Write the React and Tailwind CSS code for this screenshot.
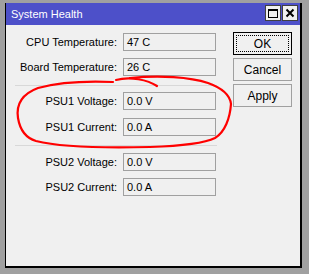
import React from "react";

const font = { fontFamily: '"Liberation Sans", Arial, sans-serif' };

function Row({ label, value, className = "" }) {
  return (
    <div className={"flex items-center h-[18px] " + className}>
      <div className="w-[103px] text-right text-[11px] text-black pr-[1px]">{label}</div>
      <div className="ml-[5px] w-[93px] h-[18px] border border-[#a0a0a0] bg-[#f0f0f0] flex items-center pl-[3px] text-[11px] text-black">
        {value}
      </div>
    </div>
  );
}

function Btn({ children, def }) {
  return (
    <div
      className={
        "w-[59px] h-[23px] flex items-center justify-center text-[12px] text-black bg-[#f0f0f0] " +
        (def ? "border border-black p-[2px]" : "border border-[#a0a0a0]")
      }
    >
      {def ? (
        <div className="w-full h-full border border-dotted border-black flex items-center justify-center">
          {children}
        </div>
      ) : (
        children
      )}
    </div>
  );
}

export default function App() {
  return (
    <div className="relative w-[309px] h-[274px] bg-[#a0a0a0] pt-[3px] pl-[5px]" style={font}>
      <div className="w-[297px] h-[265px] border-l border-r-2 border-b-2 border-black flex flex-col bg-[#f0f0f0]">
        <div className="h-[22px] bg-[#4d50c9] flex items-center pl-[5px] pr-[2px]">
          <span className="text-white text-[11px] flex-1">System Health</span>
          <div className="flex gap-[1px] mt-[-2px]">
            <div className="w-[16px] h-[16px] bg-[#f0f0f0] border border-[#404040] flex items-center justify-center">
              <div className="w-[10px] h-[9px] border border-black border-t-2"></div>
            </div>
            <div className="w-[16px] h-[16px] bg-[#f0f0f0] border border-[#404040] flex items-center justify-center">
              <svg width="10" height="10" viewBox="0 0 10 10">
                <path d="M1.5 1.5 L8.5 8.5 M8.5 1.5 L1.5 8.5" stroke="#000" strokeWidth="2" />
              </svg>
            </div>
          </div>
        </div>
        <div className="flex flex-1 pl-[9px]">
          <div className="w-[202px] flex flex-col pt-[8px]">
            <Row label="CPU Temperature:" value="47 C" />
            <Row label="Board Temperature:" value="26 C" className="mt-[7px]" />
            <div className="h-px bg-[#d8d8d8] mt-[9px]" />
            <Row label="PSU1 Voltage:" value="0.0 V" className="mt-[6px]" />
            <Row label="PSU1 Current:" value="0.0 A" className="mt-[8px]" />
            <div className="h-px bg-[#d8d8d8] mt-[9px]" />
            <Row label="PSU2 Voltage:" value="0.0 V" className="mt-[7px]" />
            <Row label="PSU2 Current:" value="0.0 A" className="mt-[7px]" />
          </div>
          <div className="ml-[16px] flex flex-col gap-[3px] pt-[7px]">
            <Btn def>OK</Btn>
            <Btn>Cancel</Btn>
            <Btn>Apply</Btn>
          </div>
        </div>
      </div>
      <svg className="absolute left-0 top-0 pointer-events-none" width="309" height="274" viewBox="0 0 309 274">
        <path
          d="M157 86 C148 80 130 76 116 80 M113 82 C90 81 60 82 38 88 C22 94 16 105 18 118 C20 130 26 138 36 141 C60 147 110 148 150 147 C180 146 205 143 215 138 C225 132 230 118 231 104 C230 95 222 88 208 83 C190 77 160 75 130 78"
          fill="none"
          stroke="#f00"
          strokeWidth="2.2"
          strokeLinecap="round"
        />
      </svg>
    </div>
  );
}
